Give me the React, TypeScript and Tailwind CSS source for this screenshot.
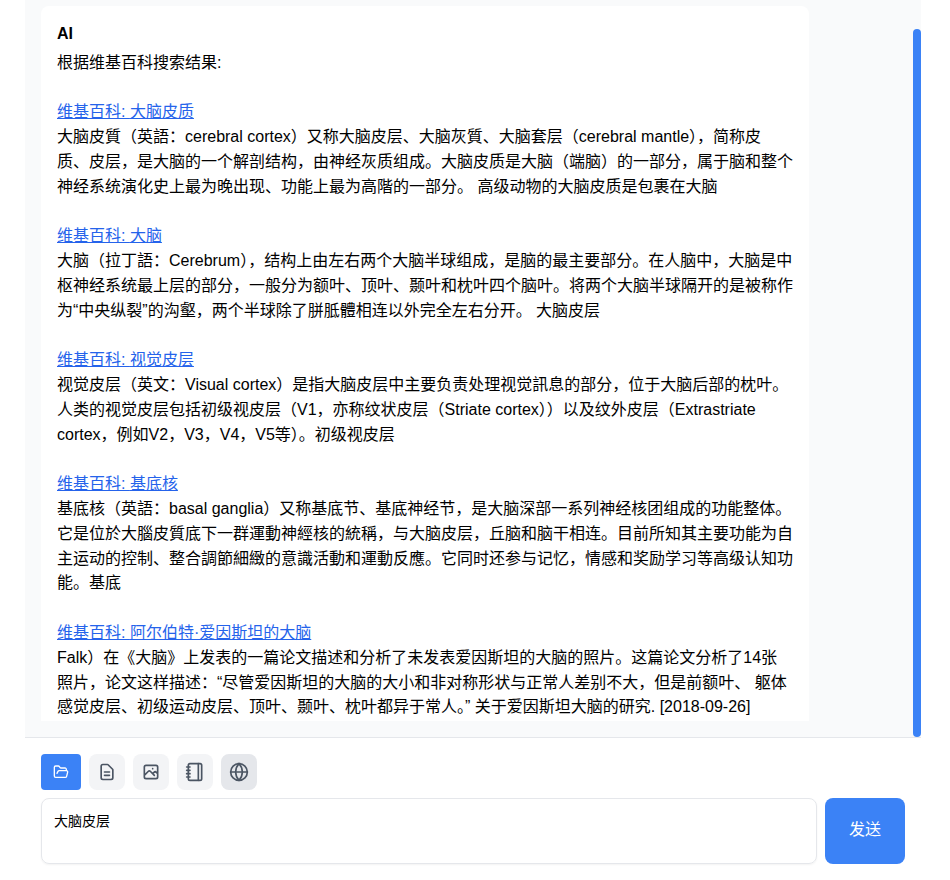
import type { ReactNode } from 'react';
import { FolderOpen, Globe, Notebook } from 'lucide-react';

interface SearchResult {
  title: string;
  summary: string;
}

const results: SearchResult[] = [
  {
    title: '大脑皮质',
    summary:
      '大脑皮質（英語：cerebral cortex）又称大脑皮层、大脑灰質、大脑套层（cerebral mantle），简称皮质、皮层，是大脑的一个解剖结构，由神经灰质组成。大脑皮质是大脑（端脑）的一部分，属于脑和整个神经系统演化史上最为晚出现、功能上最为高階的一部分。 高级动物的大脑皮质是包裹在大脑',
  },
  {
    title: '大脑',
    summary:
      '大脑（拉丁語：Cerebrum），结构上由左右两个大脑半球组成，是脑的最主要部分。在人脑中，大脑是中枢神经系统最上层的部分，一般分为额叶、顶叶、颞叶和枕叶四个脑叶。将两个大脑半球隔开的是被称作为“中央纵裂”的沟壑，两个半球除了胼胝體相连以外完全左右分开。 大脑皮层',
  },
  {
    title: '视觉皮层',
    summary:
      '视觉皮层（英文：Visual cortex）是指大脑皮层中主要负责处理视觉訊息的部分，位于大脑后部的枕叶。人类的视觉皮层包括初级视皮层（V1，亦称纹状皮层（Striate cortex））以及纹外皮层（Extrastriate cortex，例如V2，V3，V4，V5等）。初级视皮层',
  },
  {
    title: '基底核',
    summary:
      '基底核（英語：basal ganglia）又称基底节、基底神经节，是大脑深部一系列神经核团组成的功能整体。它是位於大腦皮質底下一群運動神經核的統稱，与大脑皮层，丘脑和脑干相连。目前所知其主要功能为自主运动的控制、整合調節細緻的意識活動和運動反應。它同时还参与记忆，情感和奖励学习等高级认知功能。基底',
  },
  {
    title: '阿尔伯特·爱因斯坦的大脑',
    summary:
      'Falk）在《大脑》上发表的一篇论文描述和分析了未发表爱因斯坦的大脑的照片。这篇论文分析了14张照片，论文这样描述：“尽管爱因斯坦的大脑的大小和非对称形状与正常人差别不大，但是前额叶、 躯体感觉皮层、初级运动皮层、顶叶、颞叶、枕叶都异于常人。” 关于爱因斯坦大脑的研究. [2018-09-26]',
  },
];

function PathIcon({ d }: { d: string }) {
  return (
    <svg className="size-5" fill="none" viewBox="0 0 24 24" stroke="currentColor">
      <path strokeLinecap="round" strokeLinejoin="round" strokeWidth={2} d={d} />
    </svg>
  );
}

function ToolButton({ active, children }: { active?: boolean; children: ReactNode }) {
  return (
    <button
      className={`flex size-9 items-center justify-center rounded-lg text-[#4b5563] ${
        active ? 'bg-[#e5e7eb]' : 'bg-[#f3f4f6]'
      }`}
    >
      {children}
    </button>
  );
}

function Result({ title, summary }: SearchResult) {
  return (
    <div className="mb-[24.8px] last:mb-0">
      <a href="#" className="text-[#2563eb] underline">
        维基百科: {title}
      </a>
      <p>{summary}</p>
    </div>
  );
}

export default function App() {
  return (
    <div className="h-[880px] overflow-hidden bg-white pl-[25px] font-['Liberation_Sans','Noto_Sans_CJK_SC',sans-serif] text-black">
      <div className="flex h-full w-[896px] flex-col">
        {/* Message list */}
        <div className="flex h-[738px] shrink-0 justify-between border-b border-[#e5e7eb] bg-[#f9fafb] pl-4">
          <div className="mt-1.5 h-[715px] w-[768px] overflow-hidden rounded-t-lg bg-white px-4 pt-4 text-base leading-[24.8px]">
            <div className="mb-[4.6px] h-6 font-bold leading-6">AI</div>
            <p className="mb-[24.8px]">根据维基百科搜索结果:</p>
            {results.map((result) => (
              <Result key={result.title} {...result} />
            ))}
          </div>
          <div className="mt-[29px] h-[708px] w-2 rounded-full bg-[#3b82f6]" />
        </div>

        {/* Composer */}
        <div className="flex flex-col gap-2 px-4 pt-4">
          <div className="flex gap-2">
            <button className="flex h-9 w-10 items-center justify-center rounded bg-[#3b82f6] text-white">
              <FolderOpen className="size-4" />
            </button>
            <ToolButton>
              <PathIcon d="M9 12h6m-6 4h6m2 5H7a2 2 0 01-2-2V5a2 2 0 012-2h5.586a1 1 0 01.707.293l5.414 5.414a1 1 0 01.293.707V19a2 2 0 01-2 2z" />
            </ToolButton>
            <ToolButton>
              <PathIcon d="M4 16l4.586-4.586a2 2 0 012.828 0L16 16m-2-2l1.586-1.586a2 2 0 012.828 0L20 14m-6-6h.01M6 20h12a2 2 0 002-2V6a2 2 0 00-2-2H6a2 2 0 00-2 2v12a2 2 0 002 2z" />
            </ToolButton>
            <ToolButton>
              <Notebook className="size-5" />
            </ToolButton>
            <ToolButton active>
              <Globe className="size-5" />
            </ToolButton>
          </div>
          <div className="flex h-[66px] gap-2">
            <textarea
              className="h-full w-[776px] resize-none rounded-lg border border-[#e5e7eb] px-3 py-3 text-sm leading-5 shadow-xs outline-none"
              defaultValue="大脑皮层"
            />
            <button className="flex w-20 items-center justify-center rounded-lg bg-[#3b82f6] pb-0.5 text-base text-white">
              发送
            </button>
          </div>
        </div>
      </div>
    </div>
  );
}
